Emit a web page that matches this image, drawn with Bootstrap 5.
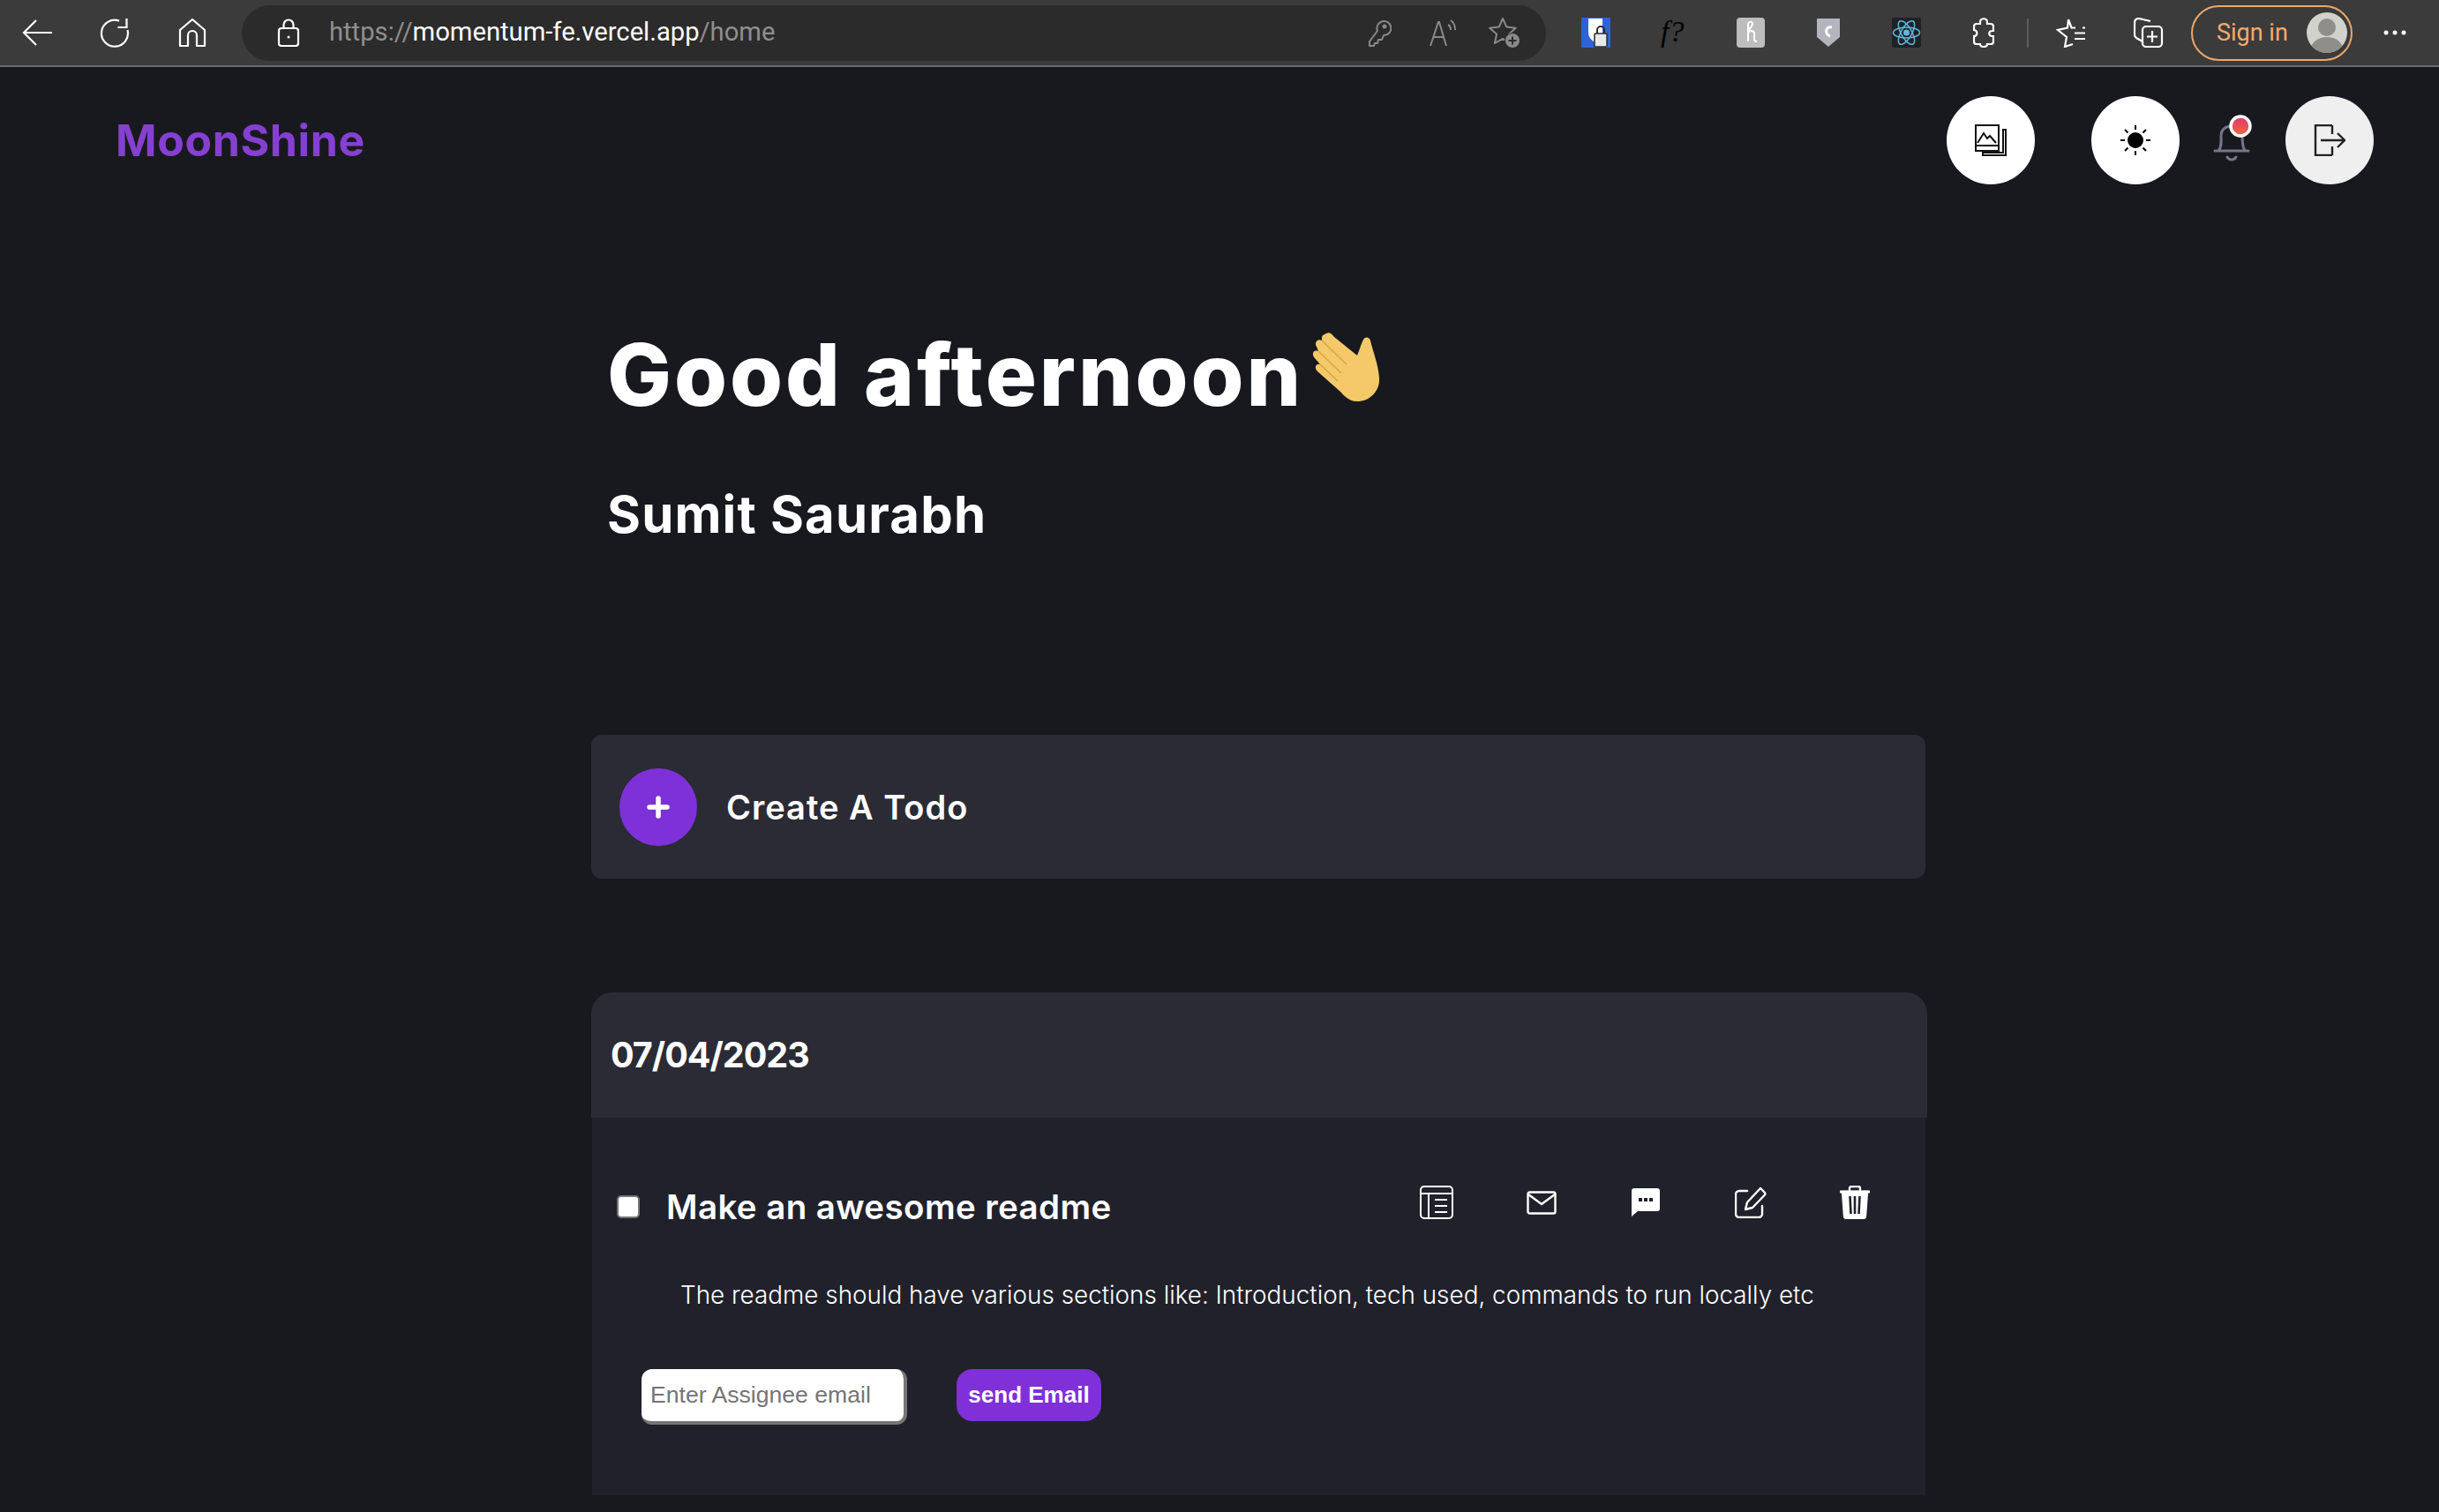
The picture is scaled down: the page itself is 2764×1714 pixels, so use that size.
<!DOCTYPE html>
<html lang="en">
<head>
  <meta charset="UTF-8" />
  <title>MoonShine</title>
  <link rel="stylesheet" href="https://cdn.jsdelivr.net/npm/bootstrap@5.3.0/dist/css/bootstrap.min.css" />
  <style>
    html, body { height: 100%; }
    body { background: #18191f; color: #fff; font-family: Inter, "Open Sans", sans-serif; overflow: hidden; }
    svg { display: block; }
    .browser-bar { height: 76px; background: #3b3b3b; border-bottom: 2px solid #6a6a6a; font-family: Roboto, sans-serif; }
    .tb-slot { width: 88px; height: 74px; flex: none; }
    .tb-first { width: 86px; }
    .url-pill { width: 1478px; height: 63px; margin-left: 12px; background: #2b2b2b; border-radius: 32px; }
    .url-pill .lock-slot { width: 99px; padding-left: 6px; }
    .url-text { font-size: 29.2px; color: #8f8f8f; width: 1154px; white-space: nowrap; }
    .url-text b { font-weight: 400; color: #fff; }
    .pill-tool { width: 71px; }
    .ext-group { margin-left: 12px; }
    .tb-sep { width: 2px; height: 33px; margin: 0 4px 0 5px; background: #5c5c5c; }
    .sign-pill { width: 183px; height: 63px; margin-left: 4px; border: 2px solid #eda76a; border-radius: 32px; color: #f3ab6f; font-size: 27px; padding: 0 4px 0 27px; }
    .avatar-dot { width: 46px; height: 46px; border-radius: 50%; overflow: hidden; background: #d2d2cd; }
    .dots-slot { width: 96px; }
    .top-nav { height: 164px; padding: 2px 74px 0 131px; }
    .logo-text { font-size: 50px; line-height: 1; font-weight: 700; color: #8540d2; letter-spacing: .6px; }
    .round-btn { width: 100px; height: 100px; border-radius: 50%; background: #fff; border: 0; padding: 0; }
    .round-btn.soft { background: #efefef; }
    .sun-btn { margin-left: 64px; }
    .bell-box { width: 120px; height: 100px; }
    .bell-dot { left: 56px; top: 21px; }
    .page-col { margin-left: 670px; width: 1514px; padding-top: 120px; }
    .greet-wrap { height: 130px; }
    .hello-title { margin: 0; padding: 0 0 0 18px; font-size: 97px; line-height: 112px; font-weight: 800; letter-spacing: 2.95px; white-space: nowrap; }
    .wave-hand { margin: -16px 0 0 9px; }
    .hello-name { margin: 0; padding: 58px 0 0 18px; height: 127px; font-size: 58px; line-height: 70px; font-weight: 700; letter-spacing: 1.2px; }
    .create-box { width: 1512px; height: 163px; margin-top: 216px; background: #2a2b35; border-radius: 12px; padding-left: 32px; }
    .plus-round { width: 88px; height: 88px; border-radius: 50%; background: #7f31d9; }
    .create-text { font-size: 38px; font-weight: 600; margin-left: 33px; letter-spacing: 1px; padding-top: 2px; }
    .date-head { height: 142px; margin-top: 129px; background: #2a2b35; border-radius: 24px 24px 0 0; padding: 2px 0 0 22px; font-size: 39.5px; font-weight: 700; letter-spacing: -1px; }
    .todo-body { margin: 0 2px 0 1px; height: 428px; background: #20212b; }
    .todo-row { height: 184px; padding: 18px 0 0 28px; }
    .todo-check { width: 26px; height: 26px; background: #fff; border: 2px solid #767676; border-radius: 5px; flex: none; }
    .todo-title { margin-left: 30px; font-size: 38.5px; font-weight: 600; letter-spacing: .4px; width: 814px; white-space: nowrap; padding-top: 2px; }
    .tool-slot { width: 118.5px; flex: none; margin-bottom: 10px; }
    .todo-desc { margin: 0; padding-left: 100px; font-size: 27.85px; font-weight: 300; line-height: 34px; white-space: nowrap; }
    .assign-row { padding-left: 56px; margin-top: 67px; }
    .assign-input { width: 301px; height: 63px; background: #fff; border-width: 0 4px 4px 0; border-style: solid; border-color: #767676; border-radius: 12px; padding: 0 0 0 10px; font: 26.6px "Liberation Sans", sans-serif; }
    .assign-input::placeholder { color: #757575; opacity: 1; }
    .assign-btn { width: 164px; height: 59px; margin-left: 56px; border: 0; border-radius: 18px; background: #7f30d8; color: #fff; font: 700 26px "Liberation Sans", sans-serif; padding: 0; }
  </style>
</head>
<body>
  <div class="browser-bar d-flex align-items-center">
    <div class="tb-slot tb-first d-flex align-items-center justify-content-center">
      <svg width="36" height="32" viewBox="0 0 36 32" fill="none" stroke="#fff" stroke-width="2.2"><path d="M34 16H2M16 2 2 16l14 14"/></svg>
    </div>
    <div class="tb-slot d-flex align-items-center justify-content-center">
      <svg width="34" height="34" viewBox="0 0 34 34" fill="none" stroke="#fff" stroke-width="2.2"><path d="M22 3.600A15 15 0 1 0 31.500 14"/><path d="M30.500 1v10h-10"/></svg>
    </div>
    <div class="tb-slot d-flex align-items-center justify-content-center">
      <svg width="32" height="34" viewBox="0 0 32 34" fill="none" stroke="#fff" stroke-width="2.2"><path d="M16 2 2 14v18h9V20a5 5 0 0 1 10 0v12h9V14z" stroke-linejoin="round"/></svg>
    </div>
    <div class="url-pill d-flex align-items-center">
      <div class="lock-slot d-flex justify-content-center">
        <svg width="26" height="32" viewBox="0 0 26 32" fill="none" stroke="#fff" stroke-width="2.2"><rect x="2" y="11" width="22" height="20" rx="3"/><path d="M7.500 11V7a5.500 5.500 0 0 1 11 0v4"/><circle cx="13" cy="21" r="1.500" fill="#fff" stroke="none"/></svg>
      </div>
      <div class="url-text">https://<b>momentum-fe.vercel.app</b>/home</div>
      <div class="pill-tool d-flex justify-content-center">
        <svg width="28" height="32" viewBox="0 0 28 32" fill="none" stroke="#8a8a8a" stroke-width="2"><path d="M12 14a8 8 0 1 1 7 5l-2 5h-4l-1 4H9l-1 3H3v-5z" stroke-linejoin="round"/><circle cx="20" cy="9" r="1.500" fill="#8a8a8a"/></svg>
      </div>
      <div class="pill-tool d-flex justify-content-center">
        <svg width="32" height="32" viewBox="0 0 32 32" fill="none" stroke="#8a8a8a" stroke-width="2"><path d="M3 31 12 4h1l8 27M6.500 21h12"/><path d="M23 7c2 1 3 3 3 6M26 2c3 2 5 6 5 11"/></svg>
      </div>
      <div class="pill-tool d-flex justify-content-center">
        <svg width="36" height="36" viewBox="0 0 36 36" fill="none" stroke="#8a8a8a" stroke-width="2"><path d="M16 2l4.300 9.600 10.400 1.100-7.800 7 2.200 10.300L16 24.800 6.900 30l2.200-10.300-7.800-7 10.400-1.100z" stroke-linejoin="round"/><circle cx="27" cy="27" r="8.500" fill="#8a8a8a" stroke="#2b2b2b" stroke-width="1"/><path d="M27 22.500v9M22.500 27h9" stroke="#2b2b2b"/></svg>
      </div>
    </div>
    <div class="ext-group d-flex align-items-center">
      <div class="tb-slot d-flex align-items-center justify-content-center">
        <svg width="33" height="34" viewBox="0 0 33 34"><rect width="33" height="34" fill="#2f62d6" rx="1"/><path d="M8 1h16v16c0 6-3 9-6 12-5-2-10-6-10-12z" fill="#fff"/><rect x="15" y="18" width="14" height="15" rx="1" fill="#e9e9e9" stroke="#2b2b2b" stroke-width="1.500"/><path d="M18 18v-4a4 4 0 0 1 8 0v4" fill="none" stroke="#2b2b2b" stroke-width="2"/></svg>
      </div>
      <div class="tb-slot d-flex align-items-center justify-content-center">
        <svg width="46" height="40" viewBox="0 0 46 40"><text x="9" y="30" font-family="Liberation Serif" font-style="italic" font-size="34" fill="#000">f?</text></svg>
      </div>
      <div class="tb-slot d-flex align-items-center justify-content-center">
        <svg width="32" height="34" viewBox="0 0 32 34"><rect width="32" height="34" rx="4" fill="#bdbdbd"/><path d="M13 27V8c0-4 5-4 5-1s-5 6-5 11c1-4 7-4 7 0v6c0 2 1 3 3 3" fill="none" stroke="#fff" stroke-width="2"/></svg>
      </div>
      <div class="tb-slot d-flex align-items-center justify-content-center">
        <svg width="28" height="34" viewBox="0 0 28 34"><path d="M1 1h26v21L14 33 1 22z" fill="#b3b5bd"/><path d="M18 11c-7-2-9 7-2 10" fill="none" stroke="#fff" stroke-width="3"/></svg>
      </div>
      <div class="tb-slot d-flex align-items-center justify-content-center">
        <svg width="33" height="34" viewBox="0 0 33 34"><rect width="33" height="34" rx="2" fill="#1f2225"/><g fill="none" stroke="#61b8dc" stroke-width="1.500"><ellipse cx="16.500" cy="17" rx="15" ry="6"/><ellipse cx="16.500" cy="17" rx="15" ry="6" transform="rotate(60 16.500 17)"/><ellipse cx="16.500" cy="17" rx="15" ry="6" transform="rotate(120 16.500 17)"/></g><circle cx="16.500" cy="17" r="3.500" fill="#61b8dc"/></svg>
      </div>
      <div class="tb-slot d-flex align-items-center justify-content-center">
        <svg width="24" height="34" viewBox="0 0 24 34" fill="none" stroke="#fff" stroke-width="2.200"><path d="M8 5c0-5 8-5 8 0v2h4c2 0 3 1 3 3v5h-1c-5 0-5 6 0 6h1v6c0 2-1 3-3 3h-4v0c0 4-8 4-8 0v0H4c-2 0-3-1-3-3v-6c4 0 5-6 0-7v-4c0-2 1-3 3-3h4z"/></svg>
      </div>
    </div>
    <div class="tb-sep"></div>
    <div class="tb-slot d-flex align-items-center justify-content-center">
      <svg width="34" height="34" viewBox="0 0 34 34" fill="none" stroke="#fff" stroke-width="2.200"><path d="M14 2l3.500 9.500H22M30 11.500h3M19 30l-9 3 2-11-10-8 11-2.500L14 2M21 17.500h12M21 24h12"/></svg>
    </div>
    <div class="tb-slot d-flex align-items-center justify-content-center">
      <svg width="34" height="34" viewBox="0 0 34 34" fill="none" stroke="#fff" stroke-width="2.200"><path d="M10 27 3 23c-2-1-2-3-2-4V6c0-3 2-5 5-5l13 3"/><rect x="10" y="10" width="22" height="23" rx="4"/><path d="M21 15v13M15 21.500h12"/></svg>
    </div>
    <div class="sign-pill d-flex align-items-center justify-content-between">
      <span>Sign in</span>
      <div class="avatar-dot">
        <svg width="46" height="46" viewBox="0 0 46 46"><circle cx="23" cy="17" r="10" fill="#8f8e88"/><ellipse cx="23" cy="42" rx="18" ry="14" fill="#8f8e88"/></svg>
      </div>
    </div>
    <div class="dots-slot d-flex justify-content-center">
      <svg width="26" height="6" viewBox="0 0 26 6" fill="#fff"><circle cx="3" cy="3" r="2.500"/><circle cx="13" cy="3" r="2.500"/><circle cx="23" cy="3" r="2.500"/></svg>
    </div>
  </div>

  <nav class="top-nav d-flex align-items-center justify-content-between">
    <span class="logo-text">MoonShine</span>
    <div class="d-flex align-items-center">
      <button class="round-btn d-flex align-items-center justify-content-center" type="button">
        <svg width="36" height="36" viewBox="0 0 36 36" fill="none" stroke="#111" stroke-width="2"><rect x="1" y="1" width="26" height="29"/><path d="M1 24h26M3 21l7-11 4 6 3-3 7 8"/><path d="M32 6h3v29H9v-3h23z"/></svg>
      </button>
      <button class="round-btn sun-btn d-flex align-items-center justify-content-center" type="button">
        <svg width="36" height="36" viewBox="0 0 36 36" fill="#000" stroke="#000" stroke-width="2"><circle cx="18" cy="18" r="8"/><path d="M18 1v5M18 30v5M1 18h5M30 18h5M6 6l3.500 3.500M26.500 26.500 30 30M6 30l3.500-3.500M26.500 9.500 30 6"/></svg>
      </button>
      <div class="bell-box d-flex align-items-center justify-content-center position-relative">
        <svg width="44" height="50" viewBox="0 0 44 50" fill="none" stroke="#76758a" stroke-width="3" stroke-linecap="round"><path d="M2 37h38M6 37c4-5 3-10 3-17 0-7 5-11 12-11s12 4 12 11c0 7 0 12 3 17"/><path d="M16 44c2 4 8 4 10 0"/></svg>
        <svg class="position-absolute bell-dot" width="26" height="26" viewBox="0 0 26 26"><defs><linearGradient id="dotFill" x1="0" y1="0" x2="0" y2="1"><stop offset="0" stop-color="#e0366e"/><stop offset="1" stop-color="#ef6a3a"/></linearGradient></defs><circle cx="13" cy="13" r="11" fill="url(#dotFill)" stroke="#fff" stroke-width="3.500"/></svg>
      </div>
      <button class="round-btn soft d-flex align-items-center justify-content-center" type="button">
        <svg width="36" height="36" viewBox="0 0 36 36" fill="none" stroke="#222" stroke-width="2.400"><path d="M21 1H2v34h19M21 25v10M21 1v10M8 18h27M27 10l8 8-8 8"/></svg>
      </button>
    </div>
  </nav>

  <div class="page-col">
    <div class="d-flex align-items-center greet-wrap">
      <h1 class="hello-title">Good afternoon</h1>
      <svg class="wave-hand" width="80" height="80" viewBox="0 0 80 80"><path d="M17 1C20-1 23 1 26 5L52 26C54 22 56 14 59 8C61 4 66 5 67 9C70 22 76 36 77 52C78 66 66 78 52 78C44 78 38 73 33 67L7 44C3 40 5 35 10 36L4 29C0 25 2 19 8 21L6 16C3 12 7 6 12 9L12 6C12 3 15 2 17 1Z" fill="#f5c96a"/><path d="M12 9l28 27M8 21l26 25M10 36l20 19" fill="none" stroke="#d6a648" stroke-width="1.600"/></svg>
    </div>
    <h2 class="hello-name">Sumit Saurabh</h2>

    <div class="create-box d-flex align-items-center">
      <div class="plus-round d-flex align-items-center justify-content-center">
        <svg width="26" height="26" viewBox="0 0 26 26" stroke="#fff" stroke-width="5.500" stroke-linecap="round"><path d="M13 3v20M3 13h20"/></svg>
      </div>
      <span class="create-text">Create A Todo</span>
    </div>

    <div class="date-head d-flex align-items-center">07/04/2023</div>
    <div class="todo-body">
      <div class="todo-row d-flex align-items-center">
        <div class="todo-check"></div>
        <span class="todo-title">Make an awesome readme</span>
        <div class="tool-slot d-flex justify-content-center">
          <svg width="38" height="38" viewBox="0 0 38 38" fill="none" stroke="#fff" stroke-width="2"><rect x="1" y="1" width="36" height="36" rx="4"/><path d="M1 9h36M10 9v28M17 16h14M17 23h14M17 30h14"/></svg>
        </div>
        <div class="tool-slot d-flex justify-content-center">
          <svg width="34" height="27" viewBox="0 0 34 27" fill="none" stroke="#fff" stroke-width="2.400"><rect x="1.500" y="1.500" width="31" height="24" rx="2"/><path d="M2 4l15 11L32 4"/></svg>
        </div>
        <div class="tool-slot d-flex justify-content-center">
          <svg width="32" height="32" viewBox="0 0 32 32"><path d="M3 0h26a3 3 0 0 1 3 3v20a3 3 0 0 1-3 3H7l-7 6V3a3 3 0 0 1 3-3z" fill="#fff"/><path d="M8 11h4v4H8zM14 11h4v4h-4zM20 11h4v4h-4z" fill="#20212b"/></svg>
        </div>
        <div class="tool-slot d-flex justify-content-center">
          <svg width="36" height="36" viewBox="0 0 36 36" fill="none" stroke="#fff" stroke-width="2.400" stroke-linecap="round" stroke-linejoin="round"><path d="M14 5H5a4 4 0 0 0-4 4v22a4 4 0 0 0 4 4h22a4 4 0 0 0 4-4v-9"/><path d="M29 2l4.500 4.500c1.200 1.200 1.200 2.300 0 3.500L20 24l-8 2 2-8z"/></svg>
        </div>
        <div class="tool-slot d-flex justify-content-center">
          <svg width="34" height="38" viewBox="0 0 34 38" fill="none" stroke="#fff" stroke-width="2.400"><path d="M0 7h34" stroke-width="2.800"/><path d="M11 7V3c0-1 1-2 2-2h8c1 0 2 1 2 2v4"/><path d="M3 7h28l-2 27c0 2-1 3-3 3H8c-2 0-3-1-3-3z" fill="#fff"/><path d="M11.500 12l1 20M17 12v20M22.500 12l-1 20" stroke="#20212b" stroke-width="2.600"/></svg>
        </div>
      </div>
      <p class="todo-desc">The readme should have various sections like: Introduction, tech used, commands to run locally etc</p>
      <div class="assign-row d-flex align-items-start">
        <input class="assign-input" type="text" placeholder="Enter Assignee email" />
        <button class="assign-btn" type="button">send Email</button>
      </div>
    </div>
  </div>
</body>
</html>
